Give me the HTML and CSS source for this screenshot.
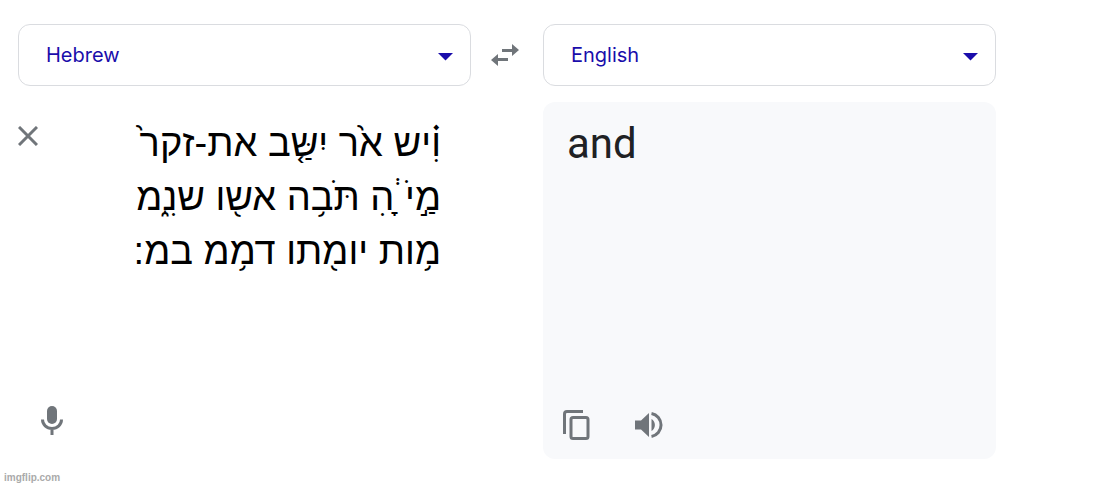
FILE: index.html
```html
<!DOCTYPE html>
<html lang="en">
<head>
  <meta charset="UTF-8">
  <meta name="viewport" content="width=device-width, initial-scale=1.0">
  <title>Translate</title>
  <link rel="stylesheet" href="styles.css">
</head>
<body>
  <main class="translator">
    <div class="lang-box">
      <select class="lang-select" aria-label="Source language">
        <option>Hebrew</option>
        <option>English</option>
      </select>
      <svg class="arrow" viewBox="0 0 15 8" aria-hidden="true"><path d="M0 0h15L7.500 7.500z"/></svg>
    </div>
    <button class="icon-btn swap" type="button" aria-label="Swap languages">
      <svg width="28" height="22" viewBox="0 0 28 22"><path d="M11 5h10V0l7 6-7 6V8H11zM17 14H7v-4l-7 6 7 6v-5h10z"/></svg>
    </button>
    <div class="lang-box">
      <select class="lang-select" aria-label="Target language">
        <option>English</option>
        <option>Hebrew</option>
      </select>
      <svg class="arrow" viewBox="0 0 15 8" aria-hidden="true"><path d="M0 0h15L7.500 7.500z"/></svg>
    </div>

    <section class="source">
      <div class="source-top">
        <button class="icon-btn" type="button" aria-label="Clear text">
          <svg width="20" height="20" viewBox="0 0 20 20"><path class="line" d="M1 1l18 18M19 1l-18 18"/></svg>
        </button>
        <textarea class="source-text" dir="rtl" lang="he" rows="3" aria-label="Source text" spellcheck="false">&#x5D5;&#x5B4;&#x597;יש א&#x599;ר י&#x5B4;ש&#x5BC;&#x5B7;&#x5A4;ב את-זקר&#x599;
מ&#x5B7;&#x5A3;י&#x5B9; &#x5B8;&#x594;ה&#x5B4; ת&#x5BC;&#x5B9;ב&#x5A5;ה אש&#x596;ו שנ&#x5B4;&#x591;מ
מ&#x5A5;ות יומ&#x596;תו דמ&#x5A5;מ במ:</textarea>
      </div>
      <button class="icon-btn mic" type="button" aria-label="Voice input">
        <svg width="22" height="30" viewBox="0 0 22 30"><rect x="6" y="0" width="10" height="18" rx="5"/><path class="line" d="M1.500 13.500c0 5 4 9 9.500 9s9.500-4 9.500-9M11 22v7"/></svg>
      </button>
    </section>

    <section class="result">
      <p class="result-text">and</p>
      <div class="result-actions">
        <button class="icon-btn" type="button" aria-label="Copy translation">
          <svg width="28" height="30" viewBox="0 0 28 30"><path class="line" d="M1.500 24V4Q1.500 1.500 4 1.500h16"/><rect class="line" x="8" y="7.500" width="17" height="21" rx="2"/></svg>
        </button>
        <button class="icon-btn" type="button" aria-label="Listen">
          <svg width="28" height="26" viewBox="0 0 28 26"><path d="M0 8.500h6L14 1v24L6 17.500H0zM16.500 7a7 7 0 0 1 0 12z"/><path class="line" d="M16.500 1.500a11.700 11.700 0 0 1 0 23"/></svg>
        </button>
      </div>
    </section>
  </main>
  <footer class="credit">imgflip.com</footer>
</body>
</html>
```
FILE: styles.css
```css
* {
  box-sizing: border-box;
}
body {
  margin: 0;
  background: #fff;
  font-family: Roboto, Arial, sans-serif;
}
.translator {
  display: grid;
  grid-template-columns: minmax(0, 1fr) 72px minmax(0, 1fr);
  row-gap: 16px;
  padding: 24px 111px 0 18px;
}
.lang-box {
  display: grid;
  align-items: center;
}
.lang-select,
.arrow {
  grid-area: 1 / 1;
}
.lang-select {
  appearance: none;
  width: 100%;
  height: 62px;
  padding: 0 27px;
  border: 1px solid #dadce0;
  border-radius: 12px;
  background: #fff;
  color: #1a0dab;
  font: 20px Inter, sans-serif;
}
.arrow {
  justify-self: end;
  width: 15px;
  height: 8px;
  margin: 4px 18px 0 0;
  fill: #1a0dab;
  pointer-events: none;
}
.icon-btn {
  display: flex;
  padding: 0;
  border: 0;
  background: none;
  fill: #70757a;
  cursor: pointer;
}
.line {
  fill: none;
  stroke: #70757a;
  stroke-width: 3;
}
.swap {
  align-self: center;
  justify-self: start;
  margin-left: 20px;
}
.source {
  display: flex;
  flex-direction: column;
  justify-content: space-between;
  align-items: flex-start;
  padding: 14px 30px 23px 0;
}
.source-top {
  display: flex;
  align-items: flex-start;
  align-self: stretch;
}
.source-top .icon-btn {
  margin-top: 10px;
}
.source-text {
  flex: 1;
  min-width: 0;
  padding: 0;
  border: 0;
  outline: 0;
  resize: none;
  overflow: hidden;
  background: none;
  color: #000;
  font: 38px/54px "Liberation Sans", Arial, sans-serif;
}
.mic {
  margin-left: 23px;
}
.result {
  grid-column: 3;
  display: flex;
  flex-direction: column;
  justify-content: space-between;
  min-height: 357px;
  padding: 17px 20px 19px 24px;
  border-radius: 12px;
  background: #f8f9fb;
}
.result-text {
  margin: 0;
  color: #202124;
  font-size: 42px;
  line-height: 50px;
}
.result-actions {
  display: flex;
  align-items: center;
  gap: 44px;
  margin-left: -4px;
}
.credit {
  padding: 11px 4px 0;
  color: #aaa;
  font: bold 10px/16px "Liberation Sans", Arial, sans-serif;
}
```
